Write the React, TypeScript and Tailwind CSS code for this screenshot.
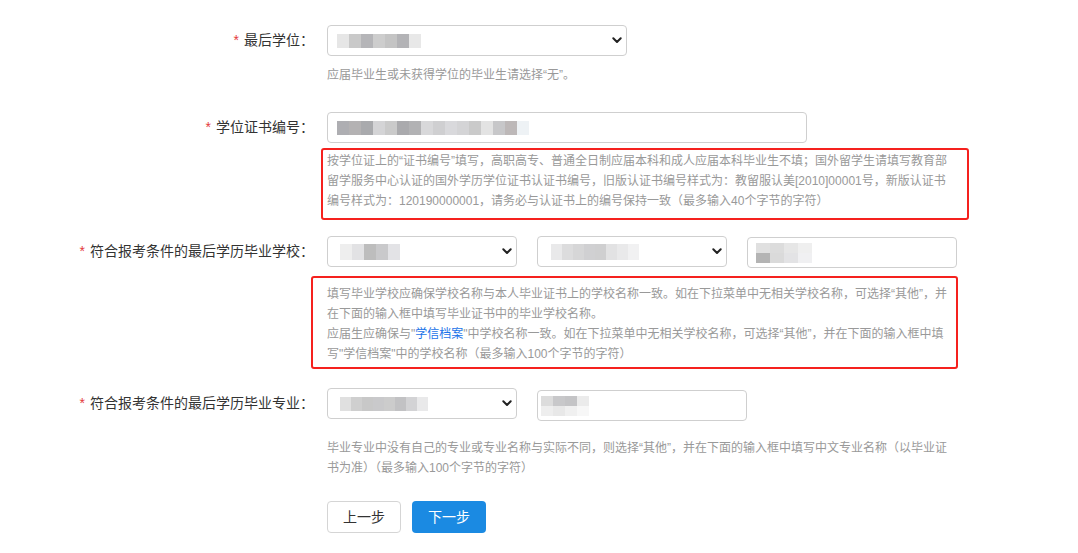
import React from "react";

const font = "font-['Liberation_Sans','Noto_Sans_CJK_SC',sans-serif]";

function Blur({ colors, h = 14, w = 11 }: { colors: string[]; h?: number; w?: number }) {
  return (
    <div className="flex blur-[0.6px]">
      {colors.map((c, i) => (
        <div key={i} style={{ backgroundColor: c, width: w, height: h }} />
      ))}
    </div>
  );
}

function Chevron() {
  return (
    <svg width="10" height="7" viewBox="0 0 10 7" className="shrink-0">
      <path d="M1.3 1.3 L5 5 L8.7 1.3" fill="none" stroke="#222" strokeWidth="2" strokeLinecap="round" strokeLinejoin="round" />
    </svg>
  );
}

function Select({ w, children }: { w: string; children?: React.ReactNode }) {
  return (
    <div className={`${w} h-[31px] border border-[#cfcfcf] rounded-[4px] bg-white flex items-center pl-[9px] pr-[4px]`}>
      <div className="flex-1 overflow-hidden">{children}</div>
      <Chevron />
    </div>
  );
}

function Label({ text }: { text: string }) {
  return (
    <div className="w-[314px] shrink-0 h-[31px] flex items-center justify-end text-[14px] text-[#333]">
      <span className="text-[#e4393c] mr-[5px]">*</span>
      <span>{text}</span>
    </div>
  );
}

function Hint({ lines }: { lines: React.ReactNode[] }) {
  return (
    <div className="text-[12px] leading-[20px] text-[#999] whitespace-nowrap">
      {lines.map((l, i) => (
        <div key={i}>{l}</div>
      ))}
    </div>
  );
}

export default function App() {
  return (
    <div className={`${font} w-[1078px] h-[553px] bg-white overflow-hidden pt-[25px]`}>
      {/* Row 1 */}
      <div className="flex">
        <Label text="最后学位：" />
        <div className="ml-[13px]">
          <Select w="w-[300px]">
            <Blur colors={["#e6e6e6", "#c9c9c9", "#b5b5b8", "#cdcdcd", "#c4c4c4", "#b3b3b6", "#e8e8e8"]} h={14} w={12} />
          </Select>
          <div className="mt-[9px]">
            <Hint lines={["应届毕业生或未获得学位的毕业生请选择“无”。"]} />
          </div>
        </div>
      </div>

      {/* Row 2 */}
      <div className="flex mt-[27px]">
        <Label text="学位证书编号：" />
        <div className="ml-[13px]">
          <div className="w-[480px] h-[31px] border border-[#cfcfcf] rounded-[4px] bg-white flex items-center pl-[9px]">
            <Blur
              colors={["#aeaeb2", "#b4b2b3", "#a9aaad", "#d4d4d6", "#cacaca", "#aaaaad", "#b2b2b4", "#d8d8da", "#cfcfd1", "#d9d9dc", "#d4d4d6", "#cacaca", "#e3e3e3", "#c7c7c9", "#bdb8b8", "#eef2f5"]}
              h={14}
              w={12}
            />
          </div>
          <div className="relative mt-[8px]">
            <div className="absolute left-[-6px] top-[-3px] w-[648px] h-[72px] border-2 border-[#f5211e] rounded-[3px] pointer-events-none" />
            <Hint
              lines={[
                "按学位证上的“证书编号”填写，高职高专、普通全日制应届本科和成人应届本科毕业生不填；国外留学生请填写教育部",
                "留学服务中心认证的国外学历学位证书认证书编号，旧版认证书编号样式为：教留服认美[2010]00001号，新版认证书",
                "编号样式为：120190000001，请务必与认证书上的编号保持一致（最多输入40个字节的字符）",
              ]}
            />
          </div>
        </div>
      </div>

      {/* Row 3 */}
      <div className="flex mt-[25px]">
        <Label text="符合报考条件的最后学历毕业学校：" />
        <div className="ml-[13px]">
          <div className="flex items-start gap-[20px]">
            <Select w="w-[190px]">
              <div className="pl-[3px]">
                <Blur colors={["#eeeeee", "#e2e2e4", "#bdbdbd", "#c9c9cb", "#e3e3e6"]} h={16} w={12} />
              </div>
            </Select>
            <Select w="w-[190px]">
              <div className="pl-[4px]">
                <Blur colors={["#e9e9ea", "#dcdcdd", "#d6d6d7", "#d0d0d2", "#cfcfd0", "#e2e2e3", "#e9e9ea", "#f1f1f2"]} h={16} w={11} />
              </div>
            </Select>
            <div className="mt-[1px] w-[210px] h-[31px] border border-[#cfcfcf] rounded-[4px] bg-white flex items-center pl-[8px]">
              <div className="flex flex-col">
                <Blur colors={["#e0e0e0", "#dcdcdc", "#e6e6e6", "#efefef"]} h={10} w={14} />
                <Blur colors={["#b4b4b4", "#dadada", "#e3e3e5", "#f0f0f2"]} h={10} w={14} />
              </div>
            </div>
          </div>
          <div className="relative mt-[16px]">
            <div className="absolute left-[-16px] top-[-8px] w-[647px] h-[93px] border-2 border-[#f5211e] rounded-[3px] pointer-events-none" />
            <Hint
              lines={[
                "填写毕业学校应确保学校名称与本人毕业证书上的学校名称一致。如在下拉菜单中无相关学校名称，可选择“其他”，并",
                "在下面的输入框中填写毕业证书中的毕业学校名称。",
                <>
                  应届生应确保与"<span className="text-[#1a73e8]">学信档案</span>"中学校名称一致。如在下拉菜单中无相关学校名称，可选择“其他”，并在下面的输入框中填
                </>,
                "写\"学信档案\"中的学校名称（最多输入100个字节的字符）",
              ]}
            />
          </div>
        </div>
      </div>

      {/* Row 4 */}
      <div className="flex mt-[24px]">
        <Label text="符合报考条件的最后学历毕业专业：" />
        <div className="ml-[13px]">
          <div className="flex items-start gap-[20px]">
            <Select w="w-[190px]">
              <div className="pl-[3px]">
                <Blur colors={["#e0e0e0", "#cfcfcf", "#c8c8c8", "#c9c9cb", "#cccccc", "#c2c2c4", "#d3d3d5", "#e9e9ea"]} h={14} w={11} />
              </div>
            </Select>
            <div className="mt-[2px] w-[210px] h-[31px] border border-[#cfcfcf] rounded-[4px] bg-white flex items-center pl-[3px]">
              <div className="flex flex-col">
                <Blur colors={["#dcdcdc", "#c8c8ca", "#c4c4c6", "#ebebeb"]} h={10} w={12} />
                <Blur colors={["#eeeeee", "#e8e8e8", "#f0f0f0", "#f7f7f7"]} h={10} w={12} />
              </div>
            </div>
          </div>
          <div className="mt-[17px]">
            <Hint
              lines={[
                "毕业专业中没有自己的专业或专业名称与实际不同，则选择“其他”，并在下面的输入框中填写中文专业名称（以毕业证",
                "书为准）（最多输入100个字节的字符）",
              ]}
            />
          </div>
          <div className="flex gap-[11px] mt-[23px]">
            <button className="w-[74px] h-[32px] border border-[#d5d5d5] rounded-[4px] bg-white text-[14px] text-[#333]">
              上一步
            </button>
            <button className="w-[74px] h-[32px] rounded-[4px] bg-[#1b8ae2] text-[14px] text-white">
              下一步
            </button>
          </div>
        </div>
      </div>
    </div>
  );
}
